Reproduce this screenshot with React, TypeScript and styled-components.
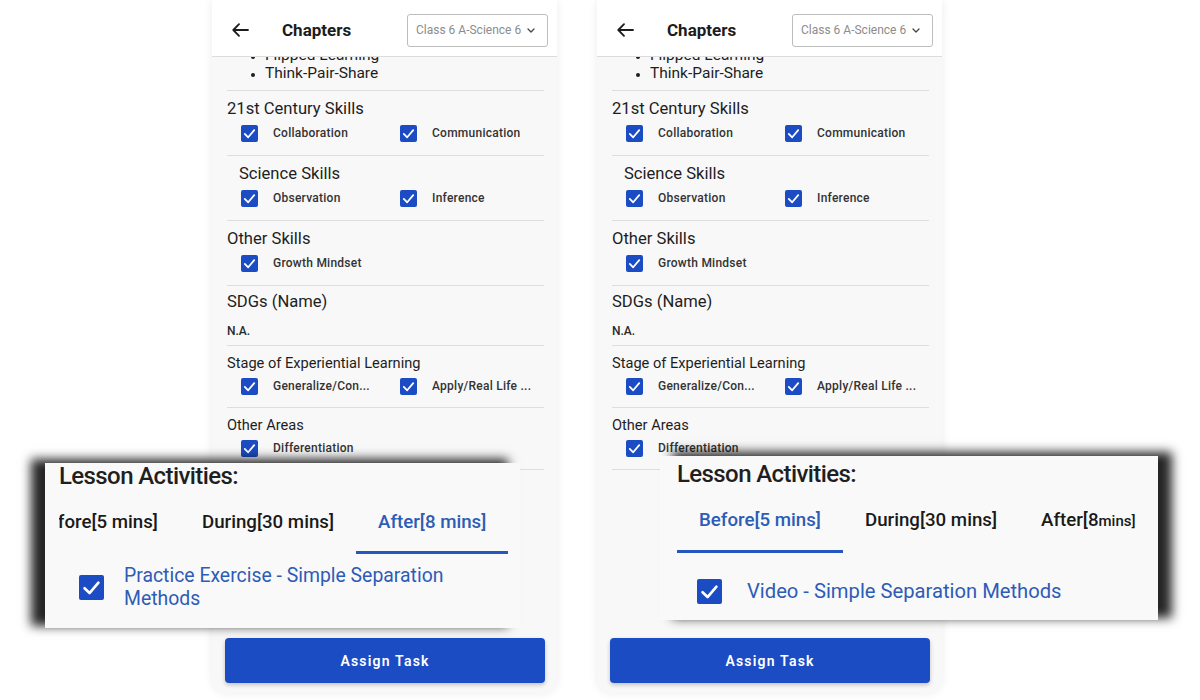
import React from "react";
import styled, { createGlobalStyle } from "styled-components";

const GlobalStyle = createGlobalStyle`
  html, body {
    margin: 0;
    background: #ffffff;
    font-family: Roboto, "Liberation Sans", sans-serif;
    color: #222;
  }
`;

const BLUE = "#1b4cc4";
const LINK = "#2d5cb6";

type Kind = "wide" | "text" | "small";

type Section = {
  title: string;
  items?: string[];
  text?: string;
  indent?: boolean;
  kind: Kind;
};

const sections: Section[] = [
  { title: "21st Century Skills", items: ["Collaboration", "Communication"], kind: "wide" },
  { title: "Science Skills", items: ["Observation", "Inference"], indent: true, kind: "wide" },
  { title: "Other Skills", items: ["Growth Mindset"], kind: "wide" },
  { title: "SDGs (Name)", text: "N.A.", kind: "text" },
  { title: "Stage of Experiential Learning", items: ["Generalize/Con...", "Apply/Real Life ..."], kind: "small" },
  { title: "Other Areas", items: ["Differentiation"], kind: "small" },
];

const Check = ({ size }: { size: number }) => (
  <CheckBox $size={size}>
    <svg width={size} height={size} viewBox="0 0 18 18" fill="none">
      <polyline points="4,9.5 7.6,13 14,5.5" stroke="#fff" strokeWidth="1.9" strokeLinecap="round" strokeLinejoin="round" />
    </svg>
  </CheckBox>
);

const Phone = () => (
  <PhoneFrame>
    <Header>
      <svg width="17" height="14" viewBox="0 0 17 14" fill="none">
        <path d="M16 7H1.5M7 1.2 1.3 7 7 12.8" stroke="#1c1c1c" strokeWidth="1.8" strokeLinecap="round" strokeLinejoin="round" />
      </svg>
      <HeaderTitle>Chapters</HeaderTitle>
      <Dropdown>
        Class 6 A-Science 6
        <svg width="8" height="5" viewBox="0 0 8 5" fill="none">
          <path d="M1 1l3 3 3-3" stroke="#444" strokeWidth="1.3" strokeLinecap="round" strokeLinejoin="round" />
        </svg>
      </Dropdown>
    </Header>
    <Body>
      <Bullets>
        <li>Flipped Learning</li>
        <li>Think-Pair-Share</li>
      </Bullets>
      {sections.map((s) => (
        <Block key={s.title} $kind={s.kind}>
          <BlockTitle $indent={s.indent} $kind={s.kind}>{s.title}</BlockTitle>
          {s.text && <PlainText>{s.text}</PlainText>}
          {s.items && (
            <Options $kind={s.kind}>
              {s.items.map((it) => (
                <Option key={it}>
                  <Check size={17} />
                  <OptionLabel>{it}</OptionLabel>
                </Option>
              ))}
            </Options>
          )}
        </Block>
      ))}
    </Body>
    <AssignButton>Assign Task</AssignButton>
  </PhoneFrame>
);

type Side = "left" | "right";

type CalloutProps = {
  side: Side;
  active: number;
  offset: number;
  item: string;
};

const Callout = ({ side, active, offset, item }: CalloutProps) => (
  <CalloutBox $side={side}>
    <CalloutTitle>Lesson Activities:</CalloutTitle>
    <TabStrip>
      <TabTrack style={{ marginLeft: offset }}>
        <Tab $active={active === 0}>Before[5 mins]</Tab>
        <Tab $active={active === 1}>During[30 mins]</Tab>
        <Tab $active={active === 2}>
          {side === "right" ? (
            <>
              After[8<Tiny>mins]</Tiny>
            </>
          ) : (
            "After[8 mins]"
          )}
        </Tab>
      </TabTrack>
    </TabStrip>
    <Activity $side={side}>
      <Check size={25} />
      <ActivityText $side={side}>{item}</ActivityText>
    </Activity>
  </CalloutBox>
);

export default function App() {
  return (
    <>
      <GlobalStyle />
      <Stage>
        <Phone />
        <Phone />
        <Callout side="left" active={2} offset={-45} item="Practice Exercise - Simple Separation Methods" />
        <Callout side="right" active={0} offset={0} item="Video - Simple Separation Methods" />
      </Stage>
    </>
  );
}

const Stage = styled.div`
  position: relative;
  display: flex;
  gap: 40px;
  padding-left: 212px;
  height: 700px;
  overflow: hidden;
`;

const PhoneFrame = styled.div`
  width: 345px;
  height: 693px;
  display: flex;
  flex-direction: column;
  background: #f8f8f8;
  border-radius: 0 0 14px 14px;
  box-shadow: 0 0 10px rgba(0, 0, 0, 0.08);
`;

const Header = styled.div`
  height: 57px;
  flex-shrink: 0;
  display: flex;
  align-items: center;
  padding: 4px 9px 0 20px;
  box-sizing: border-box;
  background: #ffffff;
  border-bottom: 1px solid #dcdcdc;
  position: relative;
  z-index: 1;
`;

const HeaderTitle = styled.div`
  margin-left: 33px;
  font-size: 17px;
  font-weight: 700;
  color: #1c1c1c;
`;

const Dropdown = styled.div`
  margin-left: auto;
  width: 141px;
  height: 33px;
  box-sizing: border-box;
  border: 1px solid #bdbdbd;
  border-radius: 3px;
  display: flex;
  align-items: center;
  gap: 6px;
  padding: 0 8px;
  font-size: 12px;
  color: #8c8c8c;
  white-space: nowrap;
`;

const Body = styled.div`
  flex: 1;
  overflow: hidden;
  padding: 0 13px 0 15px;
`;

const Bullets = styled.ul`
  margin: -11px 0 0;
  padding: 0 0 8px 38px;
  font-size: 15.5px;
  line-height: 18px;
  color: #1e1e1e;
  border-bottom: 1px solid #dedede;

  li::marker {
    font-size: 12px;
  }
`;

const Block = styled.div<{ $kind: Kind }>`
  padding: ${(p) =>
    p.$kind === "wide" ? "8px 0 10px" : p.$kind === "small" ? "7px 0 9px" : "6px 0 6px"};
  border-bottom: 1px solid #dedede;
`;

const BlockTitle = styled.div<{ $indent?: boolean; $kind: Kind }>`
  font-size: ${(p) => (p.$kind === "small" ? "14.6px" : "16.6px")};
  line-height: 20px;
  color: #1e1e1e;
  padding-left: ${(p) => (p.$indent ? "12px" : "0")};
`;

const PlainText = styled.div`
  margin-top: 11px;
  font-size: 12px;
  line-height: 16px;
  font-weight: 500;
  color: #2a2a2a;
`;

const Options = styled.div<{ $kind: Kind }>`
  margin-top: ${(p) => (p.$kind === "wide" ? "2px" : "1px")};
  display: grid;
  grid-template-columns: 159px 1fr;
  padding-left: 14px;
`;

const Option = styled.div`
  height: 24px;
  display: flex;
  align-items: center;
  gap: 15px;
`;

const CheckBox = styled.span<{ $size: number }>`
  width: ${(p) => p.$size}px;
  height: ${(p) => p.$size}px;
  flex-shrink: 0;
  display: inline-flex;
  background: ${BLUE};
  border-radius: 2px;
`;

const OptionLabel = styled.span`
  font-size: 12px;
  font-weight: 500;
  letter-spacing: 0.25px;
  color: #333333;
  white-space: nowrap;
`;

const AssignButton = styled.button`
  flex-shrink: 0;
  margin: 0 12px 10px 13px;
  height: 45px;
  border: none;
  border-radius: 4px;
  background: ${BLUE};
  box-shadow: 0 2px 4px rgba(0, 0, 0, 0.22);
  color: #ffffff;
  font-family: Roboto, "Liberation Sans", sans-serif;
  font-size: 14px;
  font-weight: 600;
  letter-spacing: 1.2px;
`;

const CalloutBox = styled.div<{ $side: Side }>`
  position: absolute;
  box-sizing: border-box;
  overflow: hidden;
  background: #f9f9f9;
  left: ${(p) => (p.$side === "left" ? "45px" : "660px")};
  top: ${(p) => (p.$side === "left" ? "463px" : "456px")};
  width: ${(p) => (p.$side === "left" ? "475px" : "498px")};
  height: ${(p) => (p.$side === "left" ? "165px" : "164px")};
  padding: ${(p) => (p.$side === "left" ? "0 0 0 14px" : "5px 0 0 17px")};
  box-shadow: ${(p) =>
    p.$side === "left"
      ? "-13px -3px 10px 1px rgba(0, 0, 0, 0.85)"
      : "13px -3px 10px 1px rgba(0, 0, 0, 0.85)"};
`;

const CalloutTitle = styled.div`
  font-size: 24px;
  line-height: 26px;
  font-weight: 500;
  letter-spacing: -0.6px;
  color: #1f1f1f;
`;

const TabStrip = styled.div`
  margin-top: 10px;
  overflow: hidden;
`;

const TabTrack = styled.div`
  display: flex;
  white-space: nowrap;
`;

const Tab = styled.div<{ $active?: boolean }>`
  padding: 12px 22px 18px;
  font-size: 18.7px;
  line-height: 22px;
  font-weight: 500;
  color: ${(p) => (p.$active ? LINK : "#1a1a1a")};
  border-bottom: 3px solid ${(p) => (p.$active ? "#2457c0" : "transparent")};
`;

const Tiny = styled.span`
  font-size: 15px;
`;

const Activity = styled.div<{ $side: Side }>`
  margin-top: ${(p) => (p.$side === "left" ? "9px" : "14px")};
  min-height: 48px;
  display: flex;
  align-items: center;
  gap: ${(p) => (p.$side === "left" ? "20px" : "25px")};
  padding-left: 20px;
`;

const ActivityText = styled.div<{ $side: Side }>`
  max-width: 335px;
  font-size: ${(p) => (p.$side === "left" ? "19.4px" : "20.2px")};
  line-height: 23px;
  color: ${LINK};
`;
